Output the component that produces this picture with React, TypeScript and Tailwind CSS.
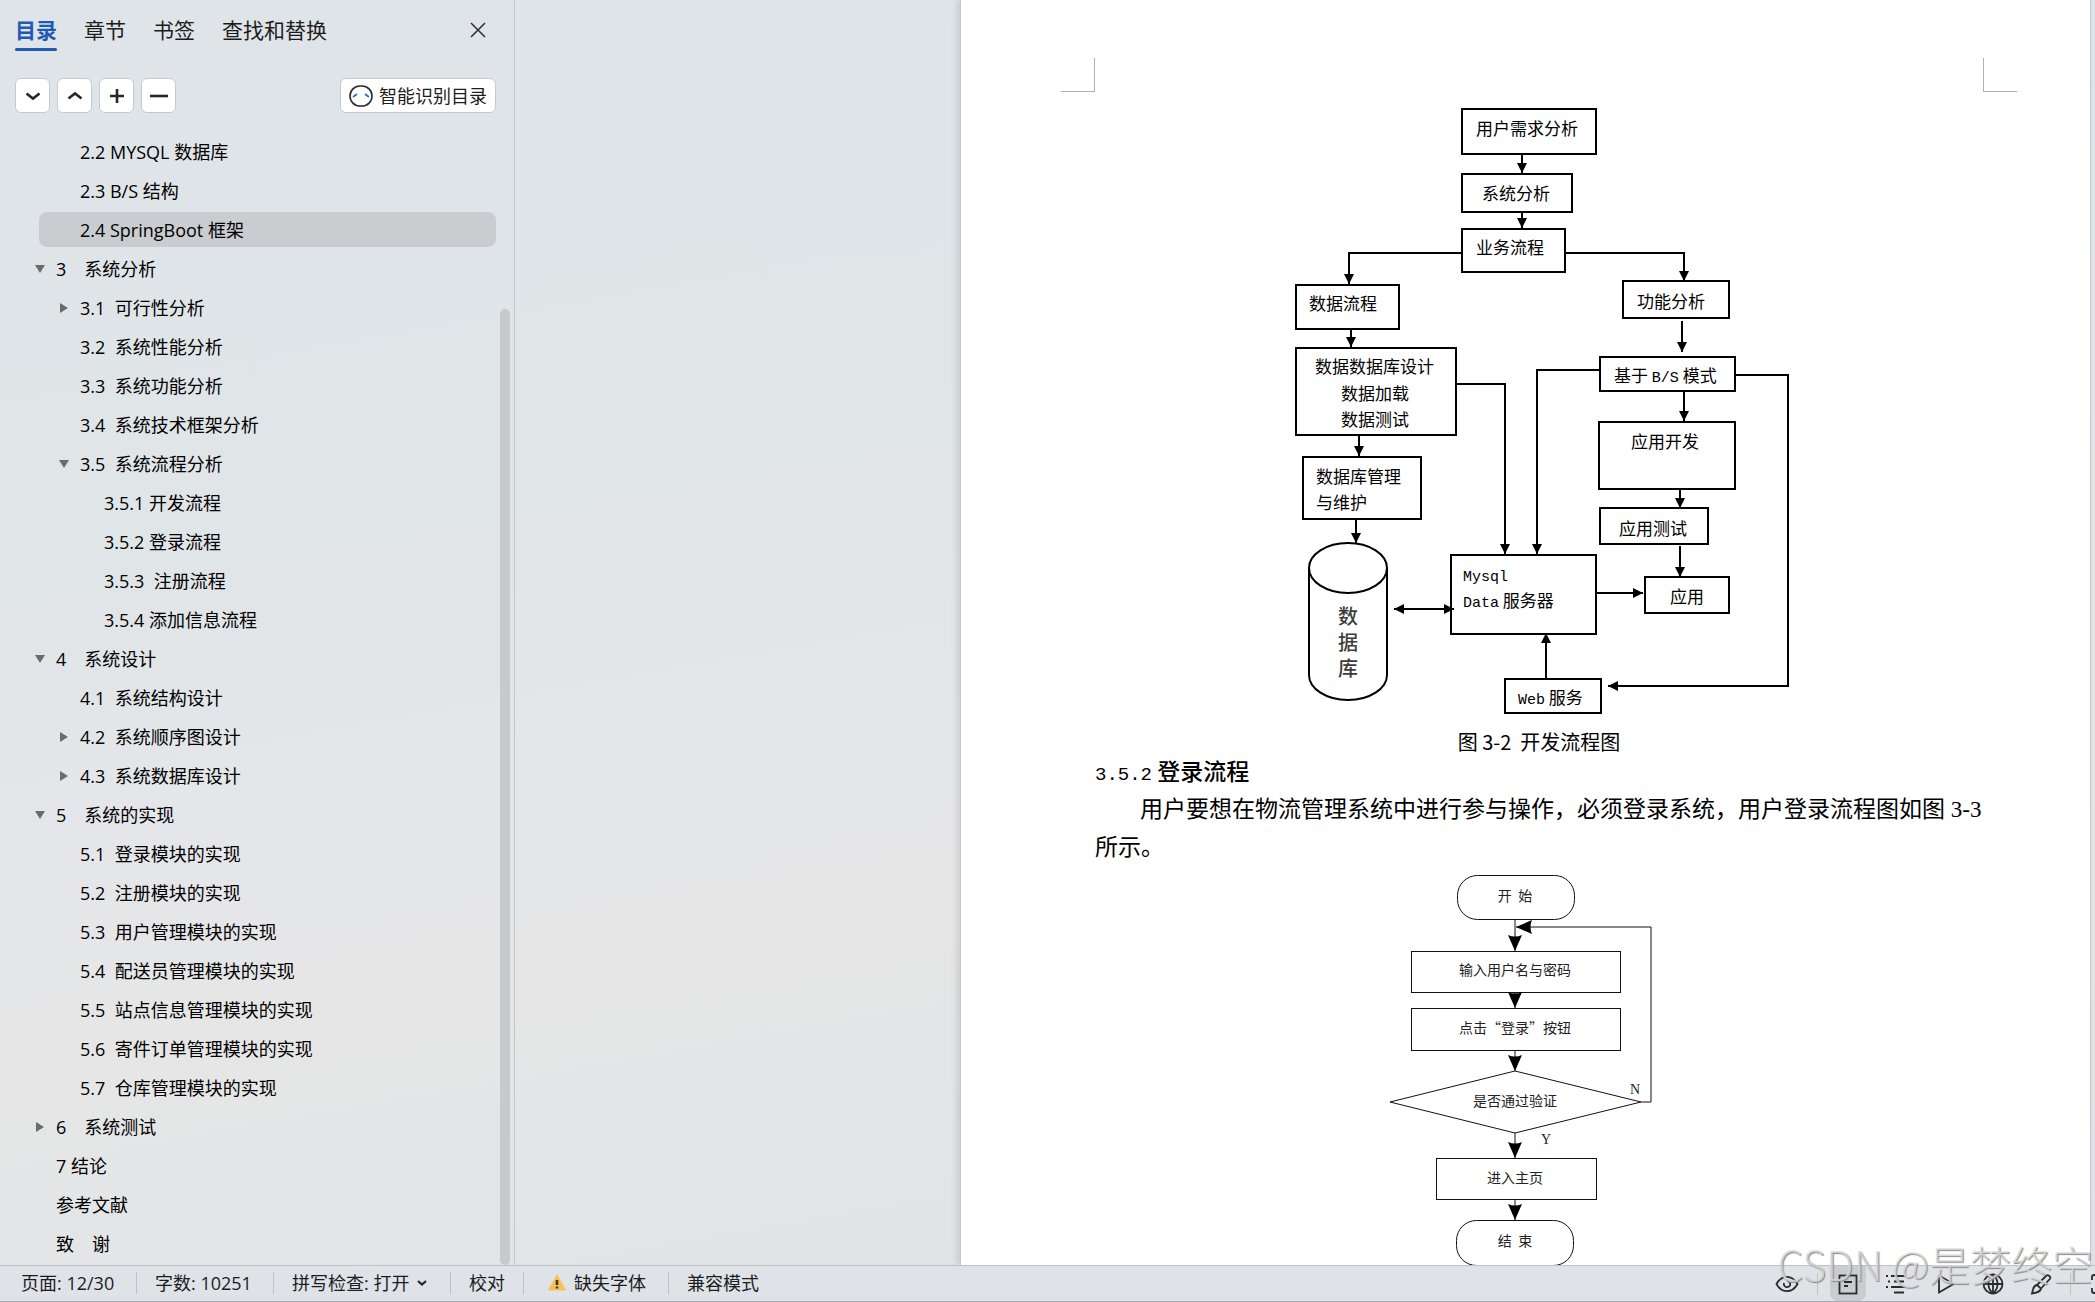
import { useState } from 'react';
import type { ReactNode } from 'react';

type OutlineItem = {
  title: string;
  level: 0 | 1 | 2;
  state?: 'open' | 'closed';
};

const outline: OutlineItem[] = [
  { title: '2.2 MYSQL 数据库', level: 1 },
  { title: '2.3 B/S 结构', level: 1 },
  { title: '2.4 SpringBoot 框架', level: 1 },
  { title: '3\u3000系统分析', level: 0, state: 'open' },
  { title: '3.1  可行性分析', level: 1, state: 'closed' },
  { title: '3.2  系统性能分析', level: 1 },
  { title: '3.3  系统功能分析', level: 1 },
  { title: '3.4  系统技术框架分析', level: 1 },
  { title: '3.5  系统流程分析', level: 1, state: 'open' },
  { title: '3.5.1 开发流程', level: 2 },
  { title: '3.5.2 登录流程', level: 2 },
  { title: '3.5.3  注册流程', level: 2 },
  { title: '3.5.4 添加信息流程', level: 2 },
  { title: '4\u3000系统设计', level: 0, state: 'open' },
  { title: '4.1  系统结构设计', level: 1 },
  { title: '4.2  系统顺序图设计', level: 1, state: 'closed' },
  { title: '4.3  系统数据库设计', level: 1, state: 'closed' },
  { title: '5\u3000系统的实现', level: 0, state: 'open' },
  { title: '5.1  登录模块的实现', level: 1 },
  { title: '5.2  注册模块的实现', level: 1 },
  { title: '5.3  用户管理模块的实现', level: 1 },
  { title: '5.4  配送员管理模块的实现', level: 1 },
  { title: '5.5  站点信息管理模块的实现', level: 1 },
  { title: '5.6  寄件订单管理模块的实现', level: 1 },
  { title: '5.7  仓库管理模块的实现', level: 1 },
  { title: '6\u3000系统测试', level: 0, state: 'closed' },
  { title: '7 结论', level: 0 },
  { title: '参考文献', level: 0 },
  { title: '致\u3000谢', level: 0 },
];

const indent = ['pl-0', 'pl-6', 'pl-12'];
const tabs = ['目录', '章节', '书签', '查找和替换'];

function Caret({ state }: { state?: 'open' | 'closed' }) {
  return (
    <svg className="-ml-1 h-2.5 w-2.5 shrink-0" viewBox="0 0 10 10" fill="#6b6b6b" aria-hidden="true">
      {state === 'open' && <path d="M0 1h10L5 9z" />}
      {state === 'closed' && <path d="M1 0v10l8-5z" />}
    </svg>
  );
}

function ToolButton({ label, path }: { label: string; path: string }) {
  return (
    <button
      type="button"
      aria-label={label}
      className="flex h-[35px] w-[35px] items-center justify-center rounded-md border border-[#c6cacd] bg-white"
    >
      <svg width="20" height="20" viewBox="0 0 20 20" fill="none" stroke="#262626" strokeWidth="2.6">
        <path d={path} />
      </svg>
    </button>
  );
}

function Sidebar() {
  const [tab, setTab] = useState('目录');
  const [active, setActive] = useState('2.4 SpringBoot 框架');

  return (
    <aside className="relative w-[515px] shrink-0 border-r border-[#c3c7cb] pr-[18px]">
      <div className="flex h-[60px] items-center gap-[27px] pl-[15px] text-[21px] leading-[30px] text-[#1c1c1c]">
        {tabs.map((name) => (
          <button
            key={name}
            type="button"
            onClick={() => setTab(name)}
            className={
              tab === name
                ? 'relative font-bold text-[#1f5bb5] after:absolute after:inset-x-0 after:-bottom-1.5 after:h-[3px] after:rounded-full after:bg-[#1f5bb5]'
                : 'relative'
            }
          >
            {name}
          </button>
        ))}
        <button type="button" aria-label="关闭" className="mr-2.5 ml-auto">
          <svg width="16" height="16" viewBox="0 0 16 16" stroke="#333" strokeWidth="1.6">
            <path d="M1 1l14 14M15 1L1 15" />
          </svg>
        </button>
      </div>

      <div className="mt-[18px] flex items-center gap-[7px] pl-[15px]">
        <ToolButton label="展开" path="M3.5 7.5L10 12.5l6.500-5" />
        <ToolButton label="收起" path="M3.500 12.500L10 7.500l6.500 5" />
        <ToolButton label="增加" path="M3 10h14M10 3v14" />
        <ToolButton label="减少" path="M1 10h18" />
        <button
          type="button"
          className="ml-auto flex h-[35px] w-[156px] items-center gap-1.5 rounded-md border border-[#c6cacd] bg-white pl-2 text-lg leading-6 whitespace-nowrap text-[#1c1c1c]"
        >
          <svg className="shrink-0" width="24" height="22" viewBox="0 0 24 22" fill="none">
            <rect x="1" y="1" width="22" height="20" rx="10" stroke="#2a2a2a" strokeWidth="1.6" />
            <path d="M4 12l4-3M16 9l4 3" stroke="#2f6bd8" strokeWidth="1.8" />
          </svg>
          智能识别目录
        </button>
      </div>

      <ul className="mt-[21px] flex flex-col gap-1 pl-[39px]">
        {outline.map((item) => (
          <li key={item.title}>
            <button
              type="button"
              onClick={() => setActive(item.title)}
              className={
                item.title === active
                  ? 'flex h-[35px] w-full items-center rounded-lg bg-[#cacdd0]'
                  : 'flex h-[35px] w-full items-center rounded-lg'
              }
            >
              <span className={`flex items-center gap-[11px] ${indent[item.level]}`}>
                <Caret state={item.state} />
                <span className="text-lg leading-6 whitespace-pre text-black">{item.title}</span>
              </span>
            </button>
          </li>
        ))}
      </ul>

      <div className="absolute top-[309px] right-1 bottom-0 w-2.5 rounded-full bg-[#c6cacc]" />
    </aside>
  );
}

function Label({ x, y, children }: { x: number; y: number; children: ReactNode }) {
  return (
    <text x={x} y={y + 6}>
      {children}
    </text>
  );
}

function Mono({ children }: { children: ReactNode }) {
  return <tspan className="font-['Liberation_Mono',monospace] text-[15px]">{children}</tspan>;
}

// x, y, width, height
const devBoxes = [
  [1462, 109, 134, 45],
  [1462, 174, 110, 38],
  [1462, 229, 103, 43],
  [1296, 285, 103, 44],
  [1296, 348, 160, 87],
  [1303, 457, 118, 62],
  [1451, 555, 145, 79],
  [1505, 679, 96, 34],
  [1623, 281, 106, 37],
  [1600, 357, 135, 34],
  [1599, 422, 136, 67],
  [1600, 508, 108, 36],
  [1645, 577, 84, 36],
];

const devLines = [
  'M1522 154V173',
  'M1522 212V228',
  'M1462 253H1349V284',
  'M1565 253H1684V281',
  'M1351 329V347',
  'M1359 435V456',
  'M1356 519V543',
  'M1456 384H1505V554',
  'M1600 370H1537V554',
  'M1682 321V352',
  'M1684 391V421',
  'M1680 489V508',
  'M1680 546V577',
  'M1596 593H1643',
  'M1546 679V633',
  'M1735 375H1788V686H1608',
];

function DevFlowChart() {
  return (
    <svg
      className="mx-auto mt-2 block shrink-0 font-['Noto_Sans_CJK_SC',sans-serif] text-[17px]"
      width="500"
      height="628"
      viewBox="1289 100 500 628"
      role="img"
      aria-label="开发流程图"
    >
      <defs>
        <marker id="dev-arrow" markerUnits="userSpaceOnUse" markerWidth="10" markerHeight="10" refX="10" refY="5" orient="auto-start-reverse">
          <path d="M0 0L10 5L0 10z" />
        </marker>
      </defs>
      <g fill="none" stroke="#000" strokeWidth="2">
        {devBoxes.map(([x, y, w, h]) => (
          <rect key={`${x}-${y}`} x={x} y={y} width={w} height={h} />
        ))}
        {devLines.map((d) => (
          <path key={d} d={d} markerEnd="url(#dev-arrow)" />
        ))}
        <path d="M1394 609H1454" markerStart="url(#dev-arrow)" markerEnd="url(#dev-arrow)" />
        <ellipse cx="1348" cy="568" rx="39" ry="25" />
        <path d="M1309 568V675A39 25 0 0 0 1387 675V568" />
      </g>
      <Label x={1476} y={129}>用户需求分析</Label>
      <Label x={1482} y={194}>系统分析</Label>
      <Label x={1476} y={248}>业务流程</Label>
      <Label x={1309} y={304}>数据流程</Label>
      <Label x={1315} y={367}>数据数据库设计</Label>
      <Label x={1341} y={394}>数据加载</Label>
      <Label x={1341} y={420}>数据测试</Label>
      <Label x={1316} y={477}>数据库管理</Label>
      <Label x={1316} y={503}>与维护</Label>
      <Label x={1463} y={575}>
        <Mono>Mysql</Mono>
      </Label>
      <Label x={1463} y={601}>
        <Mono>Data</Mono> 服务器
      </Label>
      <Label x={1518} y={698}>
        <Mono>Web</Mono> 服务
      </Label>
      <Label x={1637} y={302}>功能分析</Label>
      <Label x={1614} y={376}>
        基于 <Mono>B/S</Mono> 模式
      </Label>
      <Label x={1631} y={442}>应用开发</Label>
      <Label x={1619} y={529}>应用测试</Label>
      <Label x={1670} y={597}>应用</Label>
      <g className="text-xl font-medium" fill="#3c3c3c" textAnchor="middle">
        <Label x={1348} y={618}>数</Label>
        <Label x={1348} y={644}>据</Label>
        <Label x={1348} y={670}>库</Label>
      </g>
    </svg>
  );
}

const loginLines = [
  'M1515 918V950',
  'M1515 991V1007',
  'M1515 1049V1070',
  'M1515 1132V1157',
  'M1515 1198V1219',
  'M1641 1101H1651V926H1516',
];

function LoginFlowChart() {
  return (
    <svg
      className="mx-auto block shrink-0 font-['Noto_Sans_CJK_SC',sans-serif] text-sm"
      width="300"
      height="402"
      viewBox="1389 866 300 402"
      role="img"
      aria-label="登录流程图"
    >
      <defs>
        <marker id="login-arrow" markerUnits="userSpaceOnUse" markerWidth="16" markerHeight="14" refX="16" refY="7" orient="auto">
          <path d="M0 0Q3 7 0 14L16 7z" />
        </marker>
      </defs>
      <g fill="none" stroke="#111" strokeWidth="1">
        <rect x="1457.500" y="874.500" width="117" height="44" rx="20" />
        <rect x="1411.500" y="950.500" width="209" height="41" />
        <rect x="1411.500" y="1007.500" width="209" height="42" />
        <path d="M1515 1070L1641 1101L1515 1132L1390 1101z" />
        <rect x="1436.500" y="1157.500" width="160" height="41" />
        <rect x="1456.500" y="1219.500" width="117" height="45" rx="20" />
        {loginLines.map((d) => (
          <path key={d} d={d} markerEnd="url(#login-arrow)" />
        ))}
      </g>
      <g fill="#222" textAnchor="middle">
        <Label x={1515} y={894}>开&nbsp; 始</Label>
        <Label x={1515} y={968}>输入用户名与密码</Label>
        <Label x={1515} y={1026}>点击“登录”按钮</Label>
        <Label x={1515} y={1099}>是否通过验证</Label>
        <Label x={1515} y={1176}>进入主页</Label>
        <Label x={1515} y={1239}>结&nbsp; 束</Label>
        <g className="font-['Liberation_Serif',serif]">
          <Label x={1635} y={1087}>N</Label>
          <Label x={1546} y={1137}>Y</Label>
        </g>
      </g>
    </svg>
  );
}

function DocumentPage() {
  return (
    <article className="mr-1 ml-auto flex w-[1131px] flex-col border-x border-[#c4c6ca] bg-white pr-[107px] pl-[134px] text-black shadow-[-3px_0_6px_rgba(120,130,150,0.25)]">
      <div className="-mx-[34px] mt-[58px] flex shrink-0 justify-between">
        <div className="h-[34px] w-[34px] border-r border-b border-[#b0b0b0]" />
        <div className="h-[34px] w-[34px] border-b border-l border-[#b0b0b0]" />
      </div>
      <DevFlowChart />
      <p className="text-center font-['Noto_Sans_CJK_SC',sans-serif] text-xl leading-7">图 3-2&nbsp; 开发流程图</p>
      <h3 className="font-['Noto_Sans_CJK_SC',sans-serif] text-[23px] leading-7 font-medium">
        <span className="font-['Liberation_Mono',monospace] text-[19px] leading-none">3.5.2</span> 登录流程
      </h3>
      <p className="mt-1.5 indent-[45px] font-['Liberation_Serif','Noto_Sans_CJK_SC',serif] text-[23px] leading-[38px]">
        用户要想在物流管理系统中进行参与操作，必须登录系统，用户登录流程图如图 3-3 所示。
      </p>
      <LoginFlowChart />
    </article>
  );
}

function Divider() {
  return <span className="h-[22px] w-px shrink-0 bg-[#bfc3c7]" />;
}

const iconProps = {
  fill: 'none',
  stroke: '#2b2b2b',
  strokeWidth: 1.8,
  width: 24,
  height: 24,
  viewBox: '0 0 24 24',
};

function StatusBar() {
  return (
    <footer className="flex h-[37px] shrink-0 items-center border-t border-b border-t-[#bcc0c4] border-b-[#a9adb3] bg-[#dfe3e8] text-lg leading-6 whitespace-nowrap text-[#1c1c1c]">
      <div className="flex items-center pb-0.5">
        <button type="button" className="w-[136px] pl-[21px] text-left">页面: 12/30</button>
        <Divider />
        <button type="button" className="w-[136px] pl-[18px] text-left">字数: 10251</button>
        <Divider />
        <button type="button" className="flex w-[176px] items-center gap-2 pl-[18px]">
          拼写检查: 打开
          <svg width="10" height="8" viewBox="0 0 10 8" fill="none" stroke="#262626" strokeWidth="2.2">
            <path d="M1 2l4 3.500L9 2" />
          </svg>
        </button>
        <Divider />
        <button type="button" className="w-[72px]">校对</button>
        <Divider />
        <button type="button" className="flex w-36 items-center gap-2 pl-6">
          <svg width="18" height="17" viewBox="0 0 18 17">
            <path d="M9 1L17.500 16H.5z" fill="#f7c15a" stroke="#f7c15a" strokeLinejoin="round" />
            <path d="M9 6v5M9 12.500v2" stroke="#4a3412" strokeWidth="2.600" />
          </svg>
          缺失字体
        </button>
        <Divider />
        <button type="button" className="pl-[18px]">兼容模式</button>
      </div>

      <div className="ml-auto flex h-full items-center">
        <button type="button" aria-label="护眼模式" className="mr-[18px]">
          <svg {...iconProps}>
            <path d="M1.500 12C4 7.500 8 4.800 12 4.800S20 7.500 22.500 12C20 16.500 16 19.200 12 19.200S4 16.500 1.500 12z" />
            <path d="M12 8.800a3.200 3.200 0 1 1-3 2.200" />
          </svg>
        </button>
        <Divider />
        <button type="button" aria-label="页面视图" className="mr-[18px] ml-3 flex h-full w-9 items-center justify-center rounded-b-lg bg-[#c9ccd0]">
          <svg {...iconProps}>
            <rect x="3.500" y="3.500" width="17" height="18" />
            <path d="M8 10h8M8 14h4" />
          </svg>
        </button>
        <button type="button" aria-label="大纲视图" className="mr-[26px]">
          <svg {...iconProps}>
            <path d="M7 4h14M10 9.500h10M7 15h14M10 20.500h10M2 4h2M4 9.500h2M2 15h2" />
          </svg>
        </button>
        <button type="button" aria-label="阅读版式" className="mr-[23px]">
          <svg {...iconProps}>
            <path d="M5 3.500L19.500 12L5 20.500z" />
          </svg>
        </button>
        <button type="button" aria-label="Web 版式" className="mr-[24px]">
          <svg {...iconProps}>
            <circle cx="12" cy="12" r="9.500" />
            <path d="M2.500 12h19M12 2.500v19M12 2.500C6 7.500 6 16.500 12 21.500M12 2.500c6 5 6 14 0 19" />
          </svg>
        </button>
        <button type="button" aria-label="写作模式" className="mr-[17px]">
          <svg {...iconProps}>
            <path d="M8 13L17.500 3.500c1.500-1.300 4.800 1.500 3.500 3.300L12 16.500M8 13c-2.500.500-3.500 2-4 4.500l-1 4 4.500-1c2.500-.500 4-1.500 4.500-4z" />
          </svg>
        </button>
        <Divider />
        <svg className="ml-5" width="4" height="20" viewBox="0 0 4 20" fill="none" stroke="#2b2b2b" strokeWidth="1.800">
          <path d="M4 1H3Q1 1 1 3V6M1 14v3q0 2 2 2h1" />
        </svg>
      </div>
    </footer>
  );
}

export default function App() {
  return (
    <div className="relative flex h-screen flex-col overflow-hidden bg-[linear-gradient(170deg,#dfe4e8_0%,#e0e5e8_35%,#e5e6e9_52%,#e6e6e6_65%,#e0e4e7_88%,#dfe3e7_100%)] font-['Open_Sans','Noto_Sans_CJK_SC',sans-serif]">
      <div className="flex min-h-0 flex-1">
        <Sidebar />
        <main className="flex min-w-0 flex-1 overflow-hidden">
          <DocumentPage />
        </main>
      </div>
      <StatusBar />
      <div className="pointer-events-none absolute right-0.5 bottom-3 font-['Noto_Sans_CJK_SC',sans-serif] text-[41px] leading-[54px] font-light text-[#dcdde0]/80 [text-shadow:1px_1px_1px_#8a8a8a]">
        CSDN @是梦终空
      </div>
    </div>
  );
}
